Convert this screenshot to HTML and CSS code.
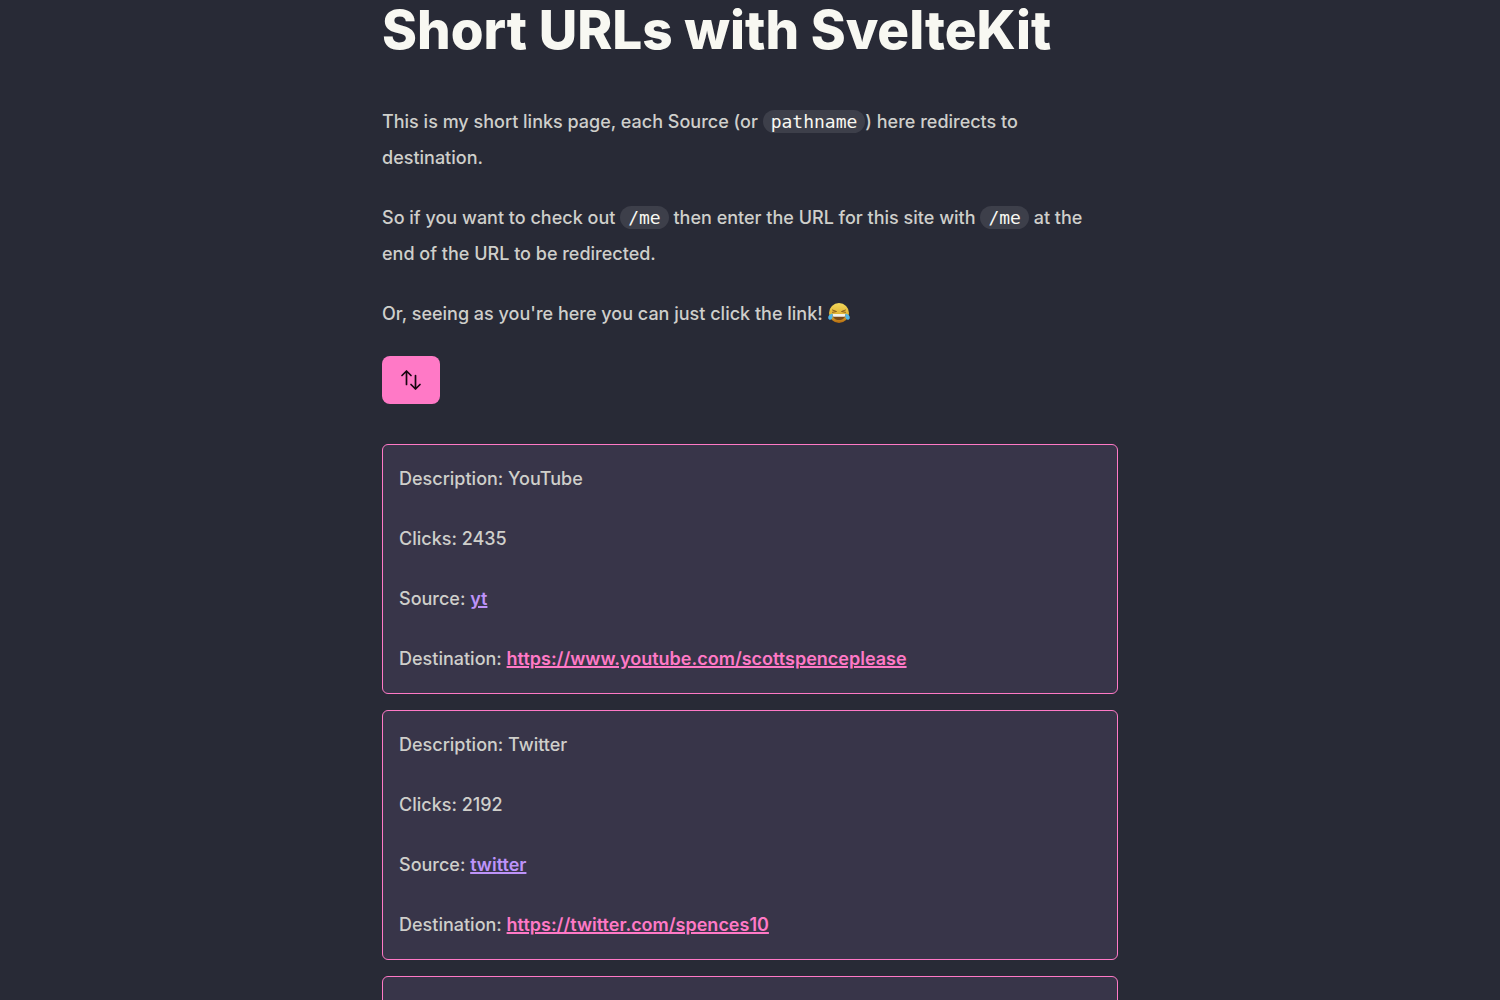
FILE: index.html
```html
<!DOCTYPE html>
<html lang="en">
<head>
  <meta charset="utf-8">
  <meta name="viewport" content="width=device-width, initial-scale=1">
  <title>Short URLs with SvelteKit</title>
  <link rel="stylesheet" href="styles.css">
</head>
<body>
  <main class="page">
    <h1 class="title">Short URLs with SvelteKit</h1>
    <p class="text">This is my short links page, each Source (or <code class="code">pathname</code>) here redirects to destination.</p>
    <p class="text">So if you want to check out <code class="code">/me</code> then enter the URL for this site with <code class="code">/me</code> at the end of the URL to be redirected.</p>
    <p class="text">Or, seeing as you're here you can just click the link!
      <svg class="emoji" viewBox="0 0 22 22" role="img" aria-label="Face with tears of joy">
        <defs>
          <linearGradient id="face" x1="0" y1="0" x2="0" y2="1">
            <stop offset="0" stop-color="#f3d95c"/>
            <stop offset=".6" stop-color="#dfb032"/>
            <stop offset="1" stop-color="#b4690f"/>
          </linearGradient>
        </defs>
        <circle cx="11" cy="11" r="10" fill="url(#face)"/>
        <path d="M4.500 8l4 1.500-4 .8M17.500 8l-4 1.500 4 .8" fill="none" stroke="#8a5f1c" stroke-width="1" stroke-linecap="round" stroke-linejoin="round"/>
        <path d="M4.500 12h13c0 4-3 6-6.500 6s-6.500-2-6.500-6z" fill="#7a4a18"/>
        <path d="M4.500 12h13l-.8 2.800H5.300z" fill="#f4f1e8"/>
        <path d="M4.500 11.500C1.500 12 0 14 .2 16c.3 2 2.600 2.300 3.700.8.900-1.300.8-3.300.6-5.300zM17.500 11.500c3 .5 4.500 2.500 4.300 4.500-.3 2-2.600 2.300-3.700.8-.9-1.300-.8-3.300-.6-5.300z" fill="#4fb4e6"/>
      </svg>
    </p>
    <button class="sort" type="button" aria-label="Change sort order">
      <svg class="sort-icon" viewBox="0 0 24 24" fill="none" stroke="currentColor" stroke-width="1.700" stroke-linecap="round" stroke-linejoin="round" aria-hidden="true">
        <path d="M3 7.500 7.500 3m0 0L12 7.500M7.500 3v13.500m13.500 0L16.500 21m0 0L12 16.500m4.500 4.500V7.500"/>
      </svg>
    </button>
    <section class="links">
      <article class="card">
        <p class="text">Description: YouTube</p>
        <p class="text">Clicks: 2435</p>
        <p class="text">Source: <a class="source" href="/yt">yt</a></p>
        <p class="text">Destination: <a class="destination" href="https://www.youtube.com/scottspenceplease">https://www.youtube.com/scottspenceplease</a></p>
      </article>
      <article class="card">
        <p class="text">Description: Twitter</p>
        <p class="text">Clicks: 2192</p>
        <p class="text">Source: <a class="source" href="/twitter">twitter</a></p>
        <p class="text">Destination: <a class="destination" href="https://twitter.com/spences10">https://twitter.com/spences10</a></p>
      </article>
      <article class="card"></article>
    </section>
  </main>
</body>
</html>
```
FILE: styles.css
```css
* {
  box-sizing: border-box;
}

body {
  margin: 0;
  height: 100vh;
  overflow: hidden;
  background: #282a36;
  color: #cfcfcb;
  font-family: Inter, "Liberation Sans", sans-serif;
  font-size: 18px;
  font-weight: 500;
  line-height: 36px;
}

.page {
  max-width: 768px;
  margin: 0 auto;
  padding: 0 16px;
}

.title {
  margin: 0 0 44px;
  color: #f8f8f2;
  font-size: 53px;
  font-weight: 800;
  line-height: 60px;
}

.text {
  margin: 0 0 24px;
}

.code {
  display: inline-block;
  padding: 1px 8px;
  border-radius: 16px;
  background: #3d3f4a;
  color: #f8f8f2;
  font-family: "DejaVu Sans Mono", monospace;
  font-size: 18px;
  font-weight: 400;
  line-height: 21px;
}

.emoji {
  width: 22px;
  height: 22px;
  vertical-align: -4px;
}

.sort {
  display: flex;
  align-items: center;
  justify-content: center;
  width: 58px;
  height: 48px;
  margin: 0 0 40px;
  padding: 0;
  border: 0;
  border-radius: 8px;
  background: #ff79c6;
  color: #16050f;
  cursor: pointer;
}

.sort-icon {
  width: 24px;
  height: 24px;
}

.links {
  display: grid;
  gap: 16px;
}

.card {
  min-height: 250px;
  padding: 16px;
  border: 1px solid #ff79c6;
  border-radius: 6px;
  background: #383549;
}

.card .text:last-child {
  margin-bottom: 0;
}

.source,
.destination {
  font-weight: 600;
  text-decoration: underline;
  text-decoration-thickness: 2px;
}

.source {
  color: #bd93f9;
}

.destination {
  color: #ff79c6;
}
```
